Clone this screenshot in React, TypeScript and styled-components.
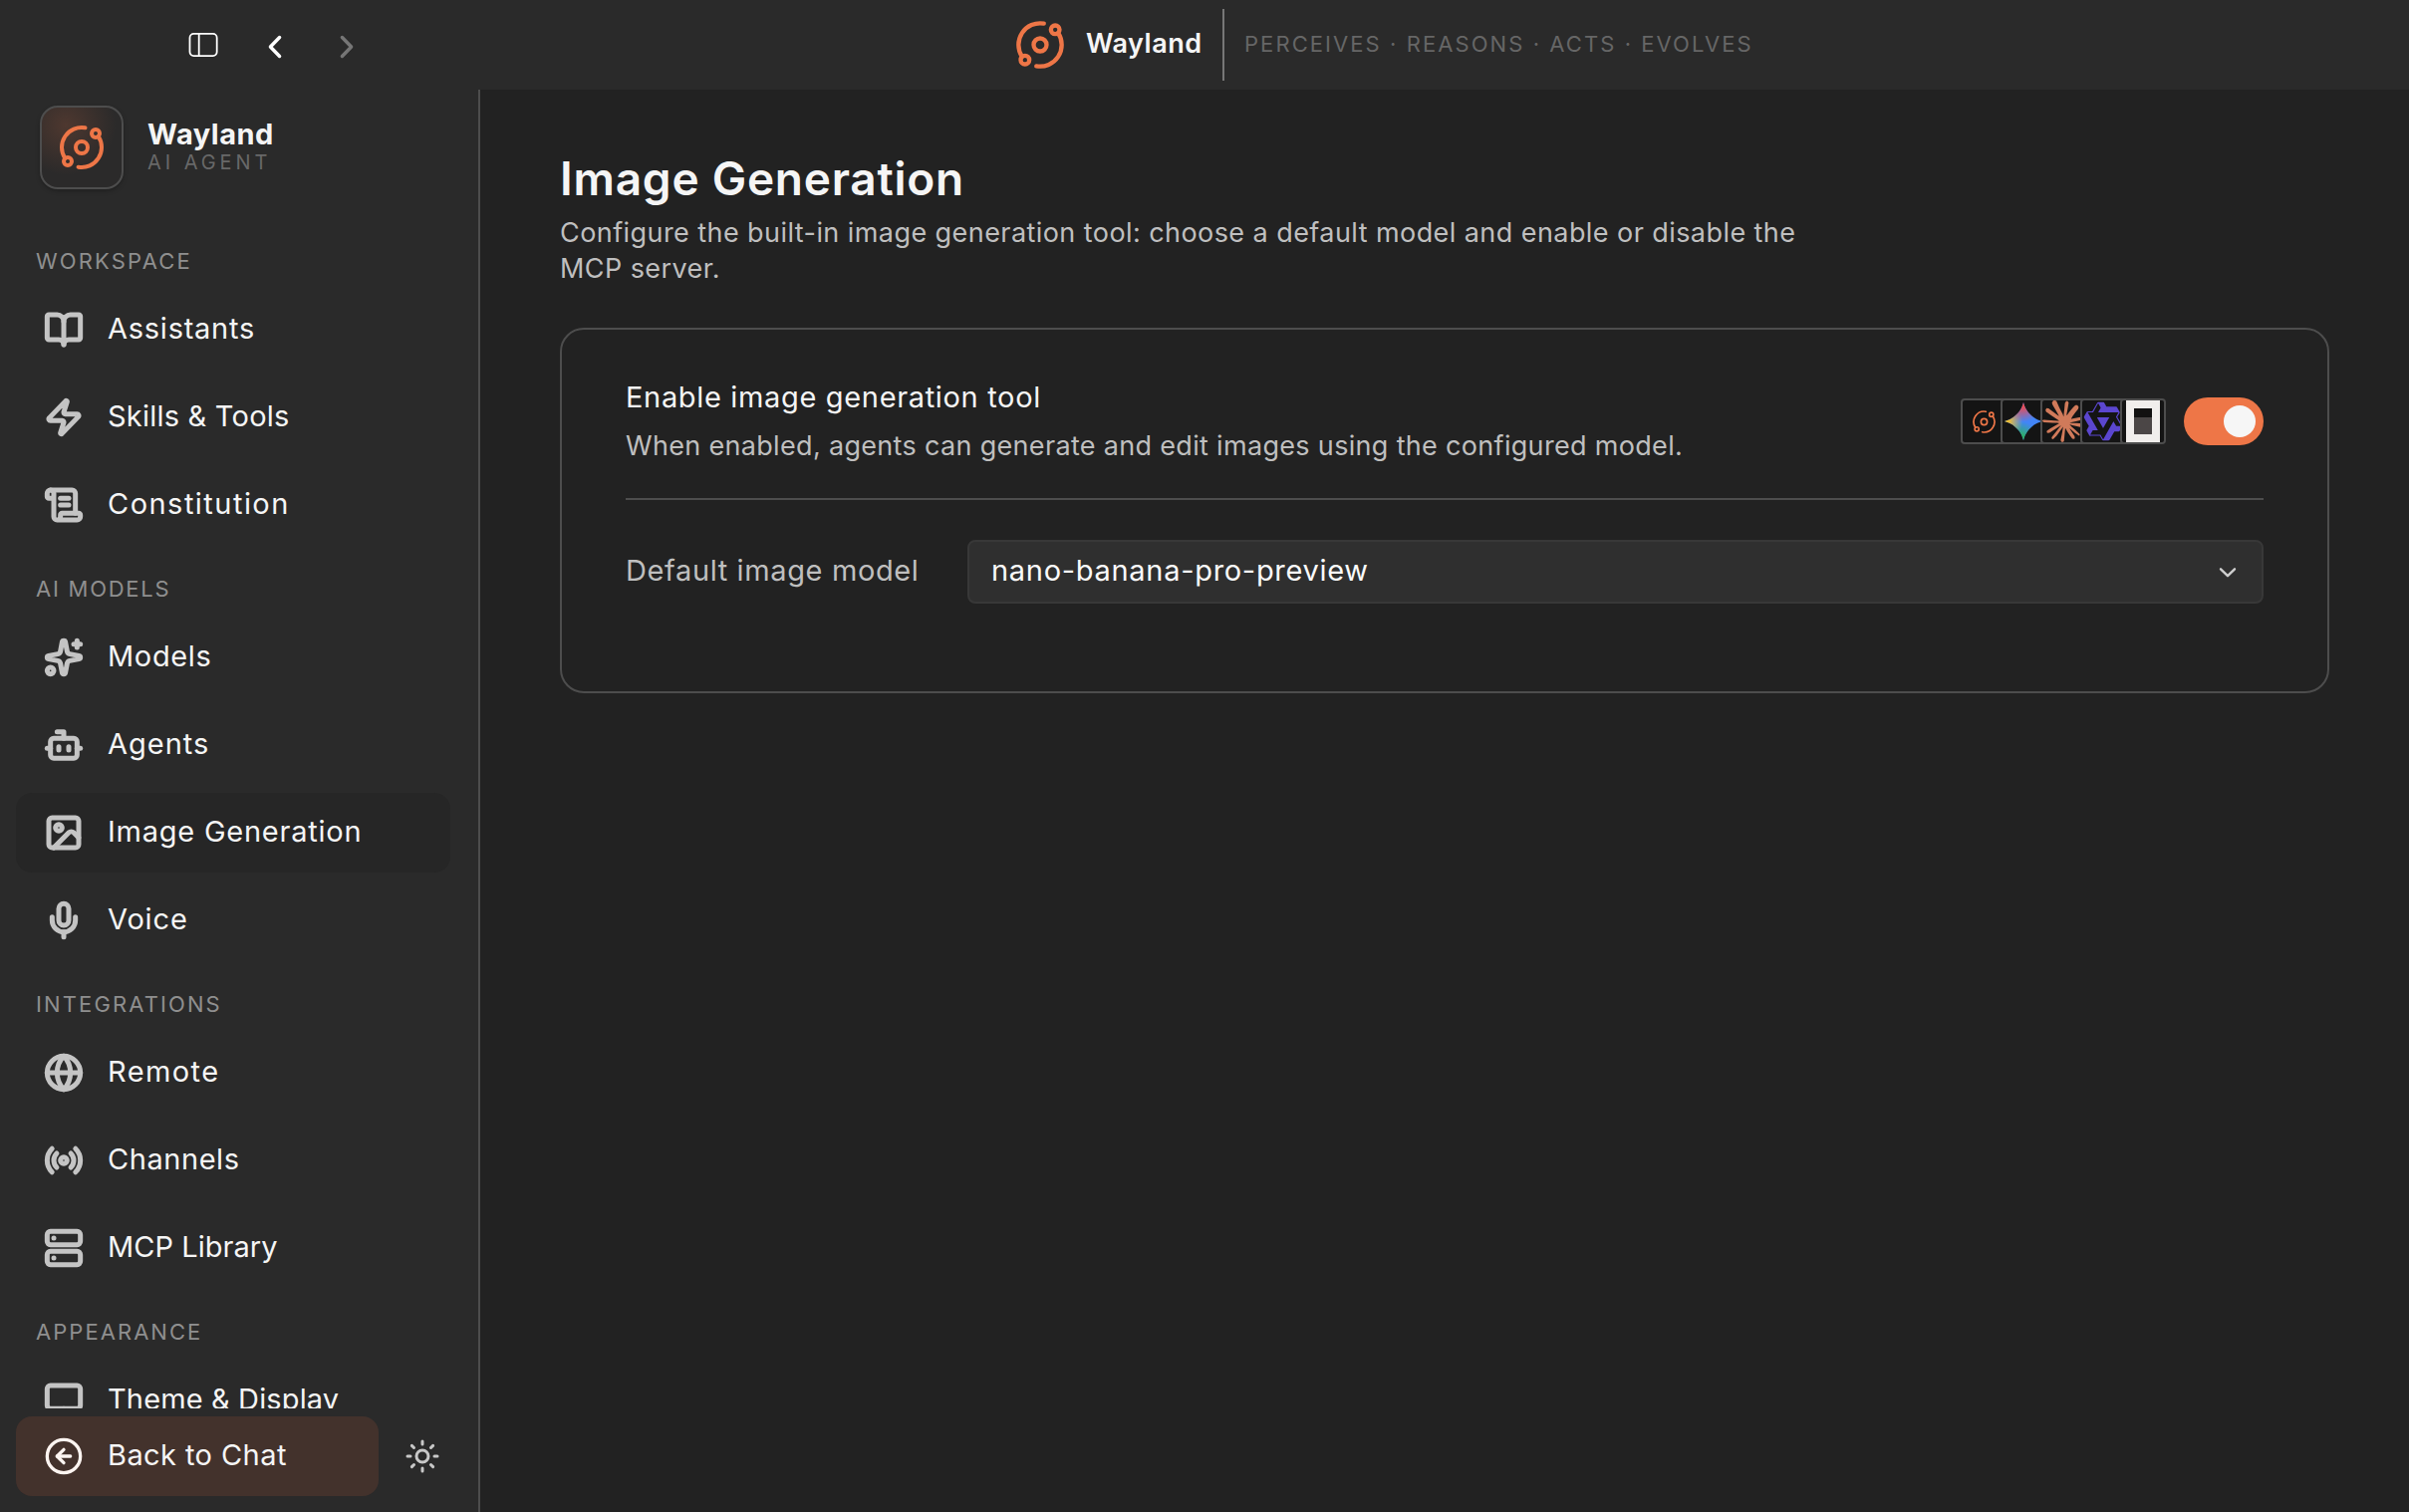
import React from 'react';
import styled, { createGlobalStyle } from 'styled-components';
import {
  BookOpen,
  Bot,
  CircleArrowLeft,
  Globe,
  Image as ImageIcon,
  Mic,
  Monitor,
  Orbit,
  Radio,
  ScrollText,
  Server,
  Sparkles,
  Sun,
  Zap,
  type LucideIcon,
} from 'lucide-react';

const color = {
  bar: '#2a2a2a',
  page: '#222222',
  line: '#4d4d4d',
  accent: '#ee7647',
  text: '#f5f5f5',
  soft: '#bfbfbf',
  label: '#8f8f8f',
  faint: '#686868',
};

const GlobalStyle = createGlobalStyle`
  *, *::before, *::after { box-sizing: border-box; }
  html, body { margin: 0; padding: 0; background: ${color.page}; }
  body { font-family: Inter, "Open Sans", sans-serif; color: ${color.text}; overflow: hidden; }
  button { font: inherit; color: inherit; border: 0; background: none; padding: 0; }
  svg { display: block; flex: none; }
`;

const Shell = styled.div`
  display: flex;
  flex-direction: column;
  width: 100%;
  height: 100vh;
`;

/* Title bar */

const TitleBar = styled.header`
  display: flex;
  align-items: center;
  height: 90px;
  flex: none;
  background: ${color.bar};
`;

const WindowTools = styled.div`
  display: flex;
  align-items: center;
  width: 1018px;
  padding-left: 188px;
`;

const ToolButton = styled.button<{ $gap?: number; $dim?: boolean }>`
  margin-left: ${p => p.$gap ?? 0}px;
  margin-top: 4px;
  color: ${p => (p.$dim ? '#767676' : '#ffffff')};
`;

const TitleBrand = styled.div`
  display: flex;
  align-items: center;
  height: 72px;
`;

const TitleName = styled.span`
  margin-left: 20px;
  padding-bottom: 3px;
  width: 117px;
  font-size: 27px;
  font-weight: 600;
  letter-spacing: 0.5px;
  white-space: nowrap;
`;

const TitleTagline = styled.span`
  margin-left: 20px;
  padding: 0 0 2px 20px;
  height: 72px;
  line-height: 70px;
  border-left: 2px solid #777777;
  color: #666666;
  font-size: 22px;
  letter-spacing: 2.07px;
  white-space: nowrap;
`;

/* Sidebar */

const Body = styled.div`
  display: flex;
  flex: 1;
  min-height: 0;
`;

const Sidebar = styled.aside`
  display: flex;
  flex-direction: column;
  width: 482px;
  flex: none;
  background: ${color.bar};
  border-right: 2px solid ${color.line};
`;

const Brand = styled.div`
  display: flex;
  align-items: center;
  gap: 24px;
  padding: 16px 0 0 40px;
  flex: none;
`;

const BrandTile = styled.div`
  display: flex;
  align-items: center;
  justify-content: center;
  width: 84px;
  height: 84px;
  border: 2px solid ${color.line};
  border-radius: 18px;
  background: radial-gradient(circle at 30% 22%, rgba(238, 118, 71, 0.18), rgba(238, 118, 71, 0) 60%), #2b2a2a;
  box-shadow: 0 2px 4px rgba(0, 0, 0, 0.25);
  color: ${color.accent};
`;

const BrandText = styled.div`
  display: flex;
  flex-direction: column;
  padding-bottom: 2px;
`;

const BrandName = styled.strong`
  font-size: 29px;
  font-weight: 700;
  line-height: 32px;
  letter-spacing: 0.5px;
`;

const BrandRole = styled.span`
  color: ${color.faint};
  font-size: 20px;
  line-height: 24px;
  letter-spacing: 3.95px;
`;

const Nav = styled.nav`
  flex: 1;
  min-height: 0;
  overflow: hidden;
  padding: 28px 28px 0 16px;
`;

const Section = styled.section`
  display: flex;
  flex-direction: column;
  gap: 8px;
  padding-top: 30px;
`;

const SectionLabel = styled.h2<{ $track: number }>`
  margin: 0 0 7px;
  padding-left: 20px;
  color: ${color.label};
  font-size: 22px;
  font-weight: 400;
  line-height: 28px;
  letter-spacing: ${p => p.$track}px;
`;

const NavItem = styled.button<{ $active?: boolean; $accent?: boolean }>`
  display: flex;
  align-items: center;
  gap: 24px;
  height: 80px;
  width: ${p => (p.$accent ? '364px' : '100%')};
  flex: none;
  padding-left: 28px;
  border-radius: 16px;
  background: ${p => (p.$accent ? '#43322c' : p.$active ? '#262626' : 'transparent')};
  color: ${p => (p.$accent ? '#fdf5f1' : '#c4c4c4')};
  text-align: left;
`;

const NavText = styled.span<{ $track: number }>`
  padding-bottom: 4px;
  color: ${color.text};
  font-size: 29px;
  letter-spacing: ${p => p.$track}px;
  white-space: nowrap;
`;

const SidebarFooter = styled.div`
  display: flex;
  align-items: center;
  flex: none;
  gap: 26px;
  padding: 8px 16px 16px;
  color: #c8c8c8;
`;

/* Settings page */

const Main = styled.main`
  flex: 1;
  min-width: 0;
  padding: 63px 80px 0;
  background: ${color.page};
`;

const PageTitle = styled.h1`
  margin: 0;
  font-size: 46px;
  font-weight: 600;
  line-height: 52px;
  letter-spacing: 0.76px;
`;

const PageIntro = styled.p`
  margin: 11px 0 0;
  max-width: 1280px;
  color: ${color.soft};
  font-size: 27px;
  line-height: 36px;
  letter-spacing: 0.43px;
`;

const Card = styled.section`
  margin-top: 41px;
  padding: 50px 64px 88px;
  border: 2px solid ${color.line};
  border-radius: 24px;
`;

const ToggleRow = styled.div`
  display: flex;
  align-items: center;
  justify-content: space-between;
  padding-bottom: 34px;
  border-bottom: 2px solid ${color.line};
`;

const SettingName = styled.div`
  font-size: 29px;
  line-height: 36px;
  letter-spacing: 0.66px;
`;

const SettingHint = styled.div`
  margin-top: 13px;
  color: ${color.soft};
  font-size: 27px;
  line-height: 36px;
  letter-spacing: 0.32px;
`;

const ToggleSide = styled.div`
  display: flex;
  align-items: center;
  gap: 18px;
  padding-bottom: 1px;
`;

const AgentStack = styled.div`
  display: flex;
`;

const AgentTile = styled.div`
  display: flex;
  align-items: center;
  justify-content: center;
  width: 46px;
  height: 46px;
  border: 2px solid ${color.line};
  border-radius: 4px;
  background: #141414;
  overflow: hidden;
  color: ${color.accent};

  & + & {
    margin-left: -6px;
  }
`;

const Switch = styled.button`
  display: flex;
  justify-content: flex-end;
  width: 80px;
  height: 48px;
  padding: 8px;
  border-radius: 24px;
  background: ${color.accent};
`;

const SwitchKnob = styled.span`
  width: 32px;
  height: 32px;
  border-radius: 50%;
  background: #f6f6f6;
`;

const ModelRow = styled.div`
  display: flex;
  align-items: center;
  margin-top: 40px;
`;

const ModelLabel = styled.label`
  width: 343px;
  flex: none;
  padding-bottom: 4px;
  color: ${color.soft};
  font-size: 29px;
  letter-spacing: 0.62px;
`;

const Select = styled.button`
  display: flex;
  align-items: center;
  justify-content: space-between;
  flex: 1;
  height: 64px;
  padding: 0 25px 0 22px;
  border: 2px solid #383838;
  border-radius: 8px;
  background: #2f2f2f;
  color: #cfcfcf;
`;

const SelectValue = styled.span`
  padding-bottom: 4px;
  color: #fafafa;
  font-size: 29px;
  letter-spacing: 0.7px;
`;

/* Drawings */

const SidebarGlyph = () => (
  <svg width="32" height="28" viewBox="0 0 32 28" fill="none" stroke="currentColor" strokeWidth="1.8">
    <rect x="2.5" y="0.9" width="27.2" height="22.2" rx="4" />
    <path d="M11.7 1v22" />
  </svg>
);

const Chevron = ({ flip }: { flip?: boolean }) => (
  <svg width="16" height="24" viewBox="0 0 16 24" fill="none" stroke="currentColor" strokeWidth="3.4" strokeLinecap="round" strokeLinejoin="round">
    <path d={flip ? 'M3.4 2.5 12.6 12l-9.2 9.5' : 'M12.6 2.5 3.4 12l9.2 9.5'} />
  </svg>
);

const SelectArrow = () => (
  <svg width="18" height="14" viewBox="0 0 18 14" fill="none" stroke="currentColor" strokeWidth="2.4" strokeLinecap="round" strokeLinejoin="round">
    <path d="M2 4.3 9 11.2l7-6.9" />
  </svg>
);

const GeminiMark = () => (
  <svg width="38" height="38" viewBox="0 0 38 38">
    <defs>
      <radialGradient id="gm-red" cx="0.47" cy="0" r="0.52">
        <stop offset="0.2" stopColor="#f04a4f" />
        <stop offset="1" stopColor="#f04a4f" stopOpacity="0" />
      </radialGradient>
      <radialGradient id="gm-yellow" cx="0" cy="0.5" r="0.48">
        <stop offset="0.2" stopColor="#f8c12c" />
        <stop offset="1" stopColor="#f8c12c" stopOpacity="0" />
      </radialGradient>
      <radialGradient id="gm-green" cx="0.42" cy="1" r="0.5">
        <stop offset="0.2" stopColor="#2bb35a" />
        <stop offset="1" stopColor="#2bb35a" stopOpacity="0" />
      </radialGradient>
    </defs>
    {['#4285f8', 'url(#gm-green)', 'url(#gm-yellow)', 'url(#gm-red)'].map(fill => (
      <path key={fill} fill={fill} d="M19 0c.8 3.2 2 6.3 4.3 9.3C27.2 14 31.8 17.600 38 19c-6.2 1.4-10.8 5-14.7 9.7C21 31.7 19.8 34.8 19 38c-.8-3.2-2-6.3-4.3-9.3C10.8 24 6.2 20.4 0 19c6.2-1.4 10.800-5 14.700-9.700C17 6.300 18.200 3.200 19 0Z" />
    ))}
  </svg>
);

const ClaudeMark = () => (
  <svg width="42" height="42" viewBox="0 0 24 24" fill="#d07a5a">
    <path d="M4.709 15.955l4.72-2.647.08-.23-.08-.128H9.2l-.79-.048-2.698-.073-2.339-.097-2.266-.122-.571-.121L0 11.784l.055-.352.48-.321.686.06 1.52.103 2.278.158 1.652.097 2.449.255h.389l.055-.157-.134-.098-.103-.097-2.358-1.596-2.552-1.688-1.336-.972-.724-.491-.364-.462-.158-1.008.656-.722.881.06.225.061.893.686 1.908 1.476 2.491 1.833.365.304.145-.103.019-.073-.164-.274-1.355-2.446-1.446-2.49-.644-1.032-.17-.619a2.97 2.97 0 01-.104-.729L6.283.134 6.696 0l.996.134.42.364.62 1.414 1.002 2.229 1.555 3.03.456.898.243.832.091.255h.158V9.01l.128-1.706.237-2.095.23-2.695.08-.76.376-.91.747-.492.584.28.48.685-.067.444-.286 1.851-.559 2.903-.364 1.942h.212l.243-.242.985-1.306 1.652-2.064.73-.82.85-.904.547-.431h1.033l.76 1.129-.34 1.166-1.064 1.347-.881 1.142-1.264 1.7-.79 1.36.073.11.188-.02 2.856-.606 1.543-.28 1.841-.315.833.388.091.395-.328.807-1.969.486-2.309.462-3.439.813-.042.03.049.061 1.549.146.662.036h1.622l3.02.225.79.522.474.638-.079.485-1.215.62-1.64-.389-3.829-.91-1.312-.329h-.182v.11l1.093 1.068 2.006 1.81 2.509 2.33.127.578-.322.455-.34-.049-2.205-1.657-.851-.747-1.926-1.62h-.128v.17l.444.649 2.345 3.521.122 1.08-.17.353-.608.213-.668-.122-1.374-1.925-1.415-2.167-1.143-1.943-.14.08-.674 7.254-.316.37-.729.28-.607-.461-.322-.747.322-1.476.389-1.924.315-1.53.286-1.9.17-.632-.012-.042-.14.018-1.434 1.967-2.18 2.945-1.726 1.845-.414.164-.717-.37.067-.662.401-.589 2.388-3.036 1.44-1.882.93-1.086-.006-.158h-.055L4.132 18.56l-1.13.146-.487-.456.061-.746.231-.243 1.908-1.312-.006.006z" />
  </svg>
);

const QwenMark = () => (
  <svg width="42" height="42" viewBox="0 0 24 24" fill="#5b46cf" fillRule="evenodd">
    <path d="M12.604 1.34c.393.69.784 1.382 1.174 2.075a.18.18 0 00.157.091h5.552c.174 0 .322.11.446.327l1.454 2.57c.19.337.24.478.024.837-.26.43-.513.864-.76 1.3l-.367.658c-.106.196-.223.28-.04.512l2.652 4.637c.172.301.111.494-.043.77-.437.785-.882 1.564-1.335 2.34-.159.272-.352.375-.68.37-.777-.016-1.552-.01-2.327.016a.099.099 0 00-.081.05 575.097 575.097 0 01-2.705 4.74c-.169.293-.38.363-.725.364-.997.003-2.002.004-3.017.002a.537.537 0 01-.465-.271l-1.335-2.323a.09.09 0 00-.083-.049H4.982c-.285.03-.553-.001-.805-.092l-1.603-2.77a.543.543 0 01-.002-.54l1.207-2.12a.198.198 0 000-.197 550.951 550.951 0 01-1.875-3.272l-.79-1.395c-.16-.31-.173-.496.095-.965.465-.813.927-1.625 1.387-2.436.132-.234.304-.334.584-.335a338.3 338.3 0 012.589-.001.124.124 0 00.107-.063l2.806-4.895a.488.488 0 01.422-.246c.524-.001 1.053 0 1.583-.006L11.704 1c.341-.003.724.032.9.34zm-3.432.403a.06.06 0 00-.052.03L6.254 6.788a.157.157 0 01-.135.078H3.253c-.056 0-.07.025-.041.074l5.81 10.156c.025.042.013.062-.034.063l-2.795.015a.218.218 0 00-.2.116l-1.32 2.31c-.044.078-.021.118.068.118l5.716.008c.046 0 .08.02.104.061l1.403 2.454c.046.081.092.082.139 0l5.006-8.76.783-1.382a.055.055 0 01.096 0l1.424 2.53a.122.122 0 00.107.062l2.763-.02a.04.04 0 00.035-.02.041.041 0 000-.04l-2.9-5.086a.108.108 0 010-.113l.293-.507 1.12-1.977c.024-.041.012-.062-.035-.062H9.2c-.059 0-.073-.026-.043-.077l1.434-2.505a.107.107 0 000-.114L9.225 1.774a.06.06 0 00-.053-.031zm6.29 8.02c.046 0 .058.02.034.06l-.832 1.465-2.613 4.585a.056.056 0 01-.05.029.058.058 0 01-.05-.029L8.498 9.841c-.02-.034-.01-.052.028-.054l.216-.012 6.722-.012z" />
  </svg>
);

const OpenCodeMark = () => (
  <svg width="34" height="42" viewBox="0 0 34 42">
    <path fill="#f1eeec" d="M0 0h34v42H0z" />
    <path fill="#121111" d="M8 8h18v9H8z" />
    <path fill="#4b4646" d="M8 17h18v17H8z" />
  </svg>
);

/* Content */

type Entry = { text: string; icon: LucideIcon; track: number; active?: boolean };

const sections: { title: string; track: number; items: Entry[] }[] = [
  {
    title: 'WORKSPACE',
    track: 2.15,
    items: [
      { text: 'Assistants', icon: BookOpen, track: 0.75 },
      { text: 'Skills & Tools', icon: Zap, track: 0.22 },
      { text: 'Constitution', icon: ScrollText, track: 1.47 },
    ],
  },
  {
    title: 'AI MODELS',
    track: 1.75,
    items: [
      { text: 'Models', icon: Sparkles, track: 0.65 },
      { text: 'Agents', icon: Bot, track: 1 },
      { text: 'Image Generation', icon: ImageIcon, track: 0.76, active: true },
      { text: 'Voice', icon: Mic, track: 0.85 },
    ],
  },
  {
    title: 'INTEGRATIONS',
    track: 2.12,
    items: [
      { text: 'Remote', icon: Globe, track: 1.4 },
      { text: 'Channels', icon: Radio, track: 0.55 },
      { text: 'MCP Library', icon: Server, track: 0.04 },
    ],
  },
  {
    title: 'APPEARANCE',
    track: 2.05,
    items: [{ text: 'Theme & Display', icon: Monitor, track: 0.13 }],
  },
];

export default function App() {
  return (
    <Shell>
      <GlobalStyle />
      <TitleBar>
        <WindowTools>
          <ToolButton>
            <SidebarGlyph />
          </ToolButton>
          <ToolButton $gap={48}>
            <Chevron />
          </ToolButton>
          <ToolButton $gap={56} $dim>
            <Chevron flip />
          </ToolButton>
        </WindowTools>
        <TitleBrand>
          <Orbit size={52} color={color.accent} />
          <TitleName>Wayland</TitleName>
          <TitleTagline>PERCEIVES · REASONS · ACTS · EVOLVES</TitleTagline>
        </TitleBrand>
      </TitleBar>

      <Body>
        <Sidebar>
          <Brand>
            <BrandTile>
              <Orbit size={48} />
            </BrandTile>
            <BrandText>
              <BrandName>Wayland</BrandName>
              <BrandRole>AI AGENT</BrandRole>
            </BrandText>
          </Brand>
          <Nav>
            {sections.map(section => (
              <Section key={section.title}>
                <SectionLabel $track={section.track}>{section.title}</SectionLabel>
                {section.items.map(({ text, icon: Icon, track, active }) => (
                  <NavItem key={text} $active={active}>
                    <Icon size={40} strokeWidth={3} />
                    <NavText $track={track}>{text}</NavText>
                  </NavItem>
                ))}
              </Section>
            ))}
          </Nav>
          <SidebarFooter>
            <NavItem $accent>
              <CircleArrowLeft size={40} />
              <NavText $track={0.42}>Back to Chat</NavText>
            </NavItem>
            <Sun size={36} />
          </SidebarFooter>
        </Sidebar>

        <Main>
          <PageTitle>Image Generation</PageTitle>
          <PageIntro>
            Configure the built-in image generation tool: choose a default model and enable or disable the MCP server.
          </PageIntro>
          <Card>
            <ToggleRow>
              <div>
                <SettingName>Enable image generation tool</SettingName>
                <SettingHint>When enabled, agents can generate and edit images using the configured model.</SettingHint>
              </div>
              <ToggleSide>
                <AgentStack>
                  <AgentTile>
                    <Orbit size={25} strokeWidth={1.6} />
                  </AgentTile>
                  <AgentTile>
                    <GeminiMark />
                  </AgentTile>
                  <AgentTile>
                    <ClaudeMark />
                  </AgentTile>
                  <AgentTile>
                    <QwenMark />
                  </AgentTile>
                  <AgentTile>
                    <OpenCodeMark />
                  </AgentTile>
                </AgentStack>
                <Switch role="switch" aria-checked="true">
                  <SwitchKnob />
                </Switch>
              </ToggleSide>
            </ToggleRow>
            <ModelRow>
              <ModelLabel>Default image model</ModelLabel>
              <Select>
                <SelectValue>nano-banana-pro-preview</SelectValue>
                <SelectArrow />
              </Select>
            </ModelRow>
          </Card>
        </Main>
      </Body>
    </Shell>
  );
}
